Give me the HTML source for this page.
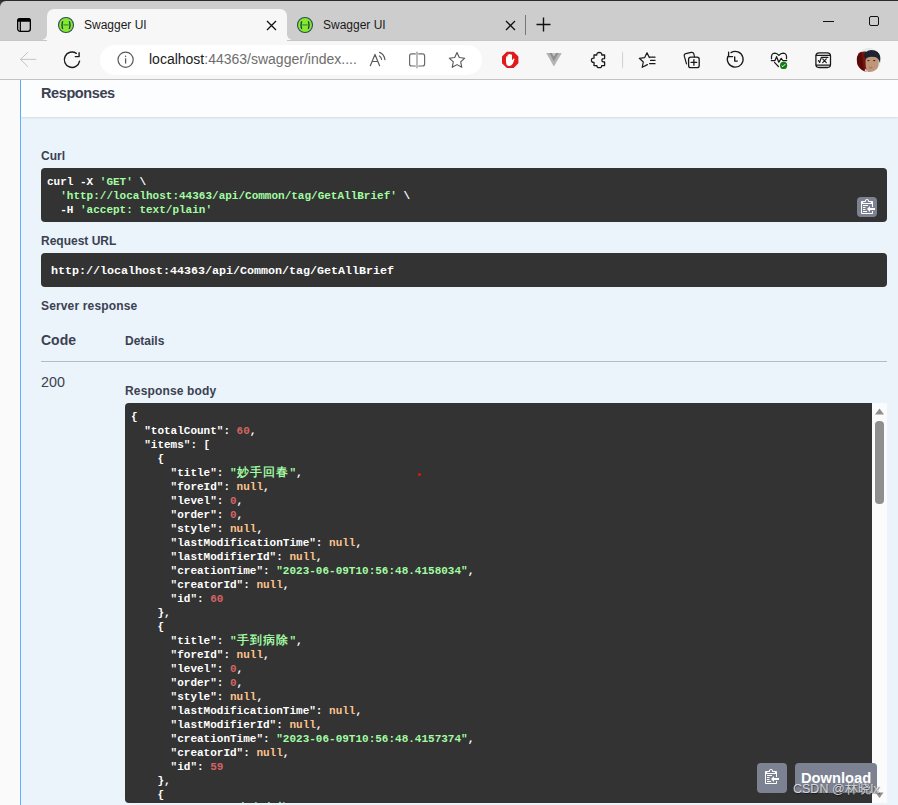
<!DOCTYPE html>
<html><head><meta charset="utf-8">
<style>
*{margin:0;padding:0;box-sizing:border-box}
html,body{width:898px;height:805px;overflow:hidden;background:#3a3a3a;font-family:"Liberation Sans",sans-serif}
.a{position:absolute}
#top{left:0;top:0;width:898px;height:1px;background:#2a2a2a}
#tabbar{left:0;top:1px;width:898px;height:39px;background:#cdcdcd;border-top-left-radius:6px}
#tab1{left:47px;top:9px;width:240px;height:31px;background:#f7f7f7;border-radius:7px 7px 0 0}
.tt{font-size:12px;color:#1a1a1a;white-space:nowrap}
#toolbar{left:0;top:40px;width:898px;height:39px;background:#f7f7f7}
#tbline{left:0;top:79px;width:898px;height:1px;background:#c4c4c4}
#addr{left:100px;top:45px;width:382px;height:30px;background:#fff;border-radius:15px}
#url{left:149px;top:51px;font-size:14px;color:#6e6e6e;white-space:nowrap}
#url b{font-weight:normal;color:#1b1b1b}
#page{left:0;top:80px;width:898px;height:725px;background:#fafafa}
#opb{left:20px;top:80px;width:878px;height:725px;background:#ebf3fb;border-left:1px solid #61affe}
#hdr{left:21px;top:80px;width:877px;height:37px;background:#fcfdff;box-shadow:0 1px 2px rgba(0,0,0,.1)}
.h{color:#3b4151;font-weight:bold;white-space:nowrap}
.blk{background:#333;border-radius:4px}
pre{font-family:"Liberation Mono",monospace;font-weight:bold;font-size:55px;line-height:70px;color:#fff;white-space:pre;transform:scale(.2);transform-origin:0 0}
.s{color:#a2fca2}.n{color:#d36363}.l{color:#fcc28c}
.btn{background:#7d8293;border-radius:4px}
.cj{display:inline-block;width:264px;font-size:60px;letter-spacing:6px;line-height:50px;white-space:nowrap}
</style></head><body>
<div class="a" id="top"></div>
<div class="a" id="tabbar"></div>
<div class="a" id="tab1"></div>
<div class="a" style="left:41px;top:34px;width:6px;height:6px;background:radial-gradient(circle at 0 0,#cdcdcd 5.5px,#f7f7f7 6.5px)"></div>
<div class="a" style="left:287px;top:34px;width:6px;height:6px;background:radial-gradient(circle at 100% 0,#cdcdcd 5.5px,#f7f7f7 6.5px)"></div>
<div class="a" id="toolbar"></div>
<div class="a" style="left:0;top:40px;width:47px;height:1px;background:#c6c6c6"></div><div class="a" style="left:287px;top:40px;width:611px;height:1px;background:#c6c6c6"></div>
<div class="a" id="tbline"></div>

<!-- sidebar icon -->
<svg class="a" style="left:17px;top:18px" width="14" height="14" viewBox="0 0 14 14"><rect x="0.65" y="0.65" width="12.7" height="12.7" rx="2.6" fill="none" stroke="#000" stroke-width="1.3"/><path d="M0 3Q0 0 3 0H11Q14 0 14 3V3.8H0Z" fill="#000"/><path d="M3.3 3V13.5" stroke="#000" stroke-width="1.2"/></svg>

<!-- tab 1 -->
<svg class="a" style="left:57px;top:16px" width="18" height="18" viewBox="0 0 18 18"><circle cx="9" cy="9" r="7.5" fill="#85ea2d" stroke="#2d4a58" stroke-width="1.1"/><path d="M6.2 5.5Q5.2 5.5 5.2 6.5V8Q5.2 9 4.3 9Q5.2 9 5.2 10V11.5Q5.2 12.5 6.2 12.5M11.8 5.5Q12.8 5.5 12.8 6.5V8Q12.8 9 13.7 9Q12.8 9 12.8 10V11.5Q12.8 12.5 11.8 12.5" fill="none" stroke="#173647" stroke-width="1.25"/><path d="M6.3 8.9H11.7" stroke="#4a8a3a" stroke-width="1.3"/></svg>
<div class="a tt" style="left:84px;top:18px">Swagger UI</div>
<svg class="a" style="left:266px;top:20px" width="11" height="11" viewBox="0 0 11 11"><path d="M1 1L10 10M10 1L1 10" stroke="#111" stroke-width="1.3"/></svg>
<!-- tab 2 -->
<svg class="a" style="left:296px;top:16px" width="18" height="18" viewBox="0 0 18 18"><circle cx="9" cy="9" r="7.5" fill="#85ea2d" stroke="#2d4a58" stroke-width="1.1"/><path d="M6.2 5.5Q5.2 5.5 5.2 6.5V8Q5.2 9 4.3 9Q5.2 9 5.2 10V11.5Q5.2 12.5 6.2 12.5M11.8 5.5Q12.8 5.5 12.8 6.5V8Q12.8 9 13.7 9Q12.8 9 12.8 10V11.5Q12.8 12.5 11.8 12.5" fill="none" stroke="#173647" stroke-width="1.25"/><path d="M6.3 8.9H11.7" stroke="#4a8a3a" stroke-width="1.3"/></svg>
<div class="a tt" style="left:323px;top:18px">Swagger UI</div>
<svg class="a" style="left:505px;top:20px" width="11" height="11" viewBox="0 0 11 11"><path d="M1 1L10 10M10 1L1 10" stroke="#111" stroke-width="1.3"/></svg>
<div class="a" style="left:525px;top:15px;width:1px;height:20px;background:#777"></div>
<svg class="a" style="left:536px;top:17px" width="15" height="15" viewBox="0 0 15 15"><path d="M7.5 0.5V14.5M0.5 7.5H14.5" stroke="#111" stroke-width="1.4"/></svg>
<!-- window controls -->
<div class="a" style="left:823px;top:20.5px;width:10.5px;height:1.2px;background:#111"></div>
<div class="a" style="left:869px;top:16px;width:10px;height:10px;border:1.4px solid #111;border-radius:2px"></div>

<!-- toolbar -->
<div class="a" id="addr"></div>
<div class="a" id="url"><b>localhost</b>:44363/swagger/index....</div>
<svg class="a" style="left:0;top:0" width="898" height="80" viewBox="0 0 898 80">
<g fill="none" stroke-linecap="round" stroke-linejoin="round">
<path d="M20.5 59.4H35.8M27.8 52.3L20.5 59.4L27.8 66.6" stroke="#c4c4c4" stroke-width="1"/>
<path d="M79.6 61.2A7.7 7.7 0 1 1 76.3 53.3" stroke="#1a1a1a" stroke-width="1.4"/>
<path d="M79.1 52.3V56.6H74.8" stroke="#1a1a1a" stroke-width="1.4" stroke-linecap="butt"/>
<circle cx="125.6" cy="59.8" r="7.6" stroke="#5a5a5a" stroke-width="1.2"/><path d="M125.6 58.3V63.6" stroke="#5a5a5a" stroke-width="1.3" stroke-linecap="butt"/><circle cx="125.6" cy="56.2" r="0.8" fill="#5a5a5a" stroke="none"/>
<path d="M370.3 65.7L375 54.4L379.6 65.7M372.1 61.5H377.9" stroke="#5a5a5a" stroke-width="1.2"/>
<path d="M379.4 56Q381.4 57.3 381.6 59.3M379.6 52.4Q384.2 54.3 384.9 59.6" stroke="#5a5a5a" stroke-width="1.2"/>
<path d="M415.3 53.9H411.6Q409.6 53.9 409.6 55.9V64Q409.6 66 411.6 66H415.3M418.7 53.9H422.6Q424.6 53.9 424.6 55.9V64Q424.6 66 422.6 66H418.7" stroke="#6a6a6a" stroke-width="1.2"/>
<path d="M417 52.2V67.7" stroke="#a0a0a0" stroke-width="1.4"/>
<path d="M457.00 52.60 L459.29 57.57 L464.73 58.22 L460.71 61.94 L461.78 67.31 L457.00 64.63 L452.22 67.31 L453.29 61.94 L449.27 58.22 L454.71 57.57Z" stroke="#555" stroke-width="1.1"/>
<path d="M594 55H596.8Q596.6 52.5 599.3 52.5Q602 52.5 601.8 55H604.6V58.6Q601.9 58.4 601.9 60.3Q601.9 62.2 604.6 62V65.6H601.7Q601.9 67.7 599.3 67.7Q596.7 67.7 596.9 65.6H594V62.3Q591.4 62.5 591.4 60.2Q591.4 57.9 594 58.1Z" stroke="#1a1a1a" stroke-width="1.3"/>
<path d="M622.6 52.2V67.8" stroke="#cfcfcf" stroke-width="1" stroke-linecap="butt"/>
<path d="M649.3 57.6L647 52.7L644.7 57.6L639.3 58.3L643.3 62L642.2 67.3L647.4 64.6" stroke="#1a1a1a" stroke-width="1.2"/>
<path d="M649.6 57.2H655M650.6 60.4H655M649.6 63.7H655" stroke="#1a1a1a" stroke-width="1.3"/>
<path d="M686.5 63.8L684.3 56.2Q683.8 54.2 685.8 53.7L691.2 52.4Q693.3 52 693.9 54L694.4 56.8" stroke="#1a1a1a" stroke-width="1.2"/>
<rect x="688.6" y="57.1" width="10.6" height="10.6" rx="2.2" stroke="#1a1a1a" stroke-width="1.3"/>
<path d="M693.9 59.6V65.2M691.1 62.4H696.7" stroke="#1a1a1a" stroke-width="1.3"/>
<path d="M731 52.6A7.9 7.9 0 1 1 727.9 56.3" stroke="#1a1a1a" stroke-width="1.3"/>
<path d="M728.6 52.2V56.6H732.6" stroke="#1a1a1a" stroke-width="1.3"/>
<path d="M734.7 57V61.1H737.3" stroke="#1a1a1a" stroke-width="1.4"/>
<path d="M771.5 58.7Q770.9 53.2 774.8 53.1Q777.2 53.1 778.9 55.4Q780.6 53.1 783.2 53.1Q787.1 53.2 786.5 58.7" stroke="#1a1a1a" stroke-width="1.25"/>
<path d="M774.5 62.4L778.4 66.5" stroke="#1a1a1a" stroke-width="1.25"/>
<path d="M771.3 60.5H775L776.6 56.7L778.8 62.2L781.2 58.3L782.8 60.5H786.7" stroke="#1a1a1a" stroke-width="1.25"/>
<circle cx="783.6" cy="65.4" r="3.6" fill="#127a12" stroke="none"/>
<path d="M782 66L782.9 66.6L785 64.4" stroke="#fff" stroke-width="1"/>
<rect x="815.9" y="52.9" width="14.6" height="14.6" rx="3.2" stroke="#1a1a1a" stroke-width="1.3"/>
<path d="M816.2 55.3H830.2M816.2 65.1H830.2" stroke="#1a1a1a" stroke-width="1.2"/>
<path d="M818.4 60.5L819.6 62.5L821.4 57.3H828M822.7 58.9L826.3 62.7M826.3 58.9L822.7 62.7" stroke="#1a1a1a" stroke-width="1.15"/>
</g>
<path d="M506.8 51.7H513.6L518.4 56.5V63.3L513.6 68.1H506.8L502 63.3V56.5Z" fill="#e01a1a"/>
<path d="M506.6 64.8Q505.6 61.5 506 59.2L506.2 56.6Q506.9 55.9 507.6 56.6V59.5V54.7Q508.3 54 509 54.7V59V54.2Q509.8 53.6 510.5 54.2V59V54.8Q511.2 54.2 512 54.8V60.6L513.2 58.7Q514.2 58.2 514.6 59L512.9 63.6Q511.8 66 509.4 66Q507.4 66 506.6 64.8Z" fill="#fff"/>
<path d="M546.2 53H561.8L553.9 66.4Z" fill="#b4b4b4"/>
<path d="M549.4 53H558.5L553.9 61.3Z" fill="#8e8e8e"/>
<path d="M551.7 53H556.1L553.9 56.8Z" fill="#c4c4c4"/>
<defs><clipPath id="av"><circle cx="868.8" cy="59.9" r="12"/></clipPath>
<radialGradient id="face" cx="0.5" cy="0.5" r="0.5"><stop offset="0" stop-color="#e0b8a0"/><stop offset="1" stop-color="#c89880"/></radialGradient></defs>
<g clip-path="url(#av)">
<rect x="856" y="47" width="26" height="26" fill="#e4eaee"/>
<path d="M856 54Q860 51 866 51.5L867 73H856Z" fill="#7a1410"/>
<path d="M857 56Q859 53 862 52.5L864 73H857Z" fill="#5a0a08"/>
<path d="M863.5 56Q865 50.5 871.5 50Q879 50 880.6 56.5L880 63Q878 57 874 57.5Q868 57.8 866 61L865 58Z" fill="#1f2330"/>
<path d="M865.6 60Q866.5 56.8 872 56.8Q878.5 57 878.8 61.5Q878.6 68 876 71Q872.5 73.5 868 72Q865.2 69 865.6 60Z" fill="#c09678"/>
<ellipse cx="868.4" cy="60.6" rx="1.3" ry="0.7" fill="#3a2a24"/>
<ellipse cx="874.2" cy="60.6" rx="1.3" ry="0.7" fill="#3a2a24"/>
<ellipse cx="870.8" cy="67.6" rx="2" ry="0.8" fill="#b07070"/>
<path d="M864 73L865.5 68.5Q867.2 70.5 868.5 73Z" fill="#cfdce4"/>
</g>
</svg>
<!-- page -->
<div class="a" id="page"></div>
<div class="a" id="opb"></div>
<div class="a" id="hdr"></div>
<div class="a h" style="left:41px;top:85px;font-size:14.5px;letter-spacing:-0.4px">Responses</div>

<div class="a h" style="left:41px;top:149px;font-size:12px">Curl</div>
<div class="a blk" style="left:41px;top:168px;width:846px;height:54px"></div>
<pre class="a" style="left:47px;top:175px">curl -X <span class="s">'GET'</span> \
  <span class="s">'http://localhost:44363/api/Common/tag/GetAllBrief'</span> \
  -H <span class="s">'accept: text/plain'</span></pre>
<div class="a btn" style="left:857px;top:197px;width:20px;height:20px"></div>
<svg class="a" style="left:861px;top:198px" width="15" height="17" viewBox="0 0 15 17"><path fill="#fff" fill-rule="evenodd" d="M2 13h4v1H2v-1zm5-6H2v1h5V7zm2 3V8l-3 3 3 3v-2h5v-2H9zM4.5 9H2v1h2.5V9zM2 12h2.5v-1H2v1zm9 1h1v2c-.02.28-.11.52-.3.7-.19.18-.42.28-.7.3H1c-.55 0-1-.45-1-1V4c0-.55.45-1 1-1h3c0-1.11.89-2 2-2 1.11 0 2 .89 2 2h3c.55 0 1 .45 1 1v5h-1V6H1v9h10v-2zM2 5h8c0-.55-.45-1-1-1H8c-.55 0-1-.45-1-1s-.45-1-1-1-1 .45-1 1-.45 1-1 1H3c-.55 0-1 .45-1 1z"/></svg>

<div class="a h" style="left:41px;top:234px;font-size:12px">Request URL</div>
<div class="a blk" style="left:41px;top:253px;width:846px;height:33.6px"></div>
<pre class="a" style="left:51px;top:264px;font-size:58.333px">http://localhost:44363/api/Common/tag/GetAllBrief</pre>

<div class="a h" style="left:41px;top:299px;font-size:12px;letter-spacing:0.15px">Server response</div>
<div class="a h" style="left:41px;top:332px;font-size:14px">Code</div>
<div class="a h" style="left:125px;top:334px;font-size:12px">Details</div>
<div class="a" style="left:41px;top:361px;width:846px;height:1px;background:#b5bac4"></div>
<div class="a" style="left:41px;top:374px;font-size:14.3px;color:#3b4151">200</div>
<div class="a h" style="left:125px;top:384px;font-size:12px;letter-spacing:0.15px">Response body</div>

<div class="a" style="left:125px;top:403px;width:762px;height:400px;background:#333;border-radius:4px 0 0 4px"></div>
<div class="a" style="left:872px;top:403px;width:15px;height:400px;background:#fbfbfb"></div>
<svg class="a" style="left:874px;top:406px" width="11" height="10" viewBox="0 0 11 10"><path d="M1 8.5L5.5 2.5L10 8.5Z" fill="#8f8f8f"/></svg>
<div class="a" style="left:875px;top:421px;width:8.5px;height:83px;background:#8f8f8f;border-radius:4px"></div>
<svg class="a" style="left:874px;top:791px" width="11" height="10" viewBox="0 0 11 10"><path d="M1.5 1.5L5.5 7L9.5 1.5Z" fill="#8f8f8f"/></svg>
<div class="a" style="left:125px;top:403px;width:747px;height:400px;overflow:hidden"><pre class="a" style="left:6px;top:7px">{
  "totalCount": <span class="n">60</span>,
  "items": [
    {
      "title": <span class="s">"<span class="cj">妙手回春</span>"</span>,
      "foreId": <span class="l">null</span>,
      "level": <span class="n">0</span>,
      "order": <span class="n">0</span>,
      "style": <span class="l">null</span>,
      "lastModificationTime": <span class="l">null</span>,
      "lastModifierId": <span class="l">null</span>,
      "creationTime": <span class="s">"2023-06-09T10:56:48.4158034"</span>,
      "creatorId": <span class="l">null</span>,
      "id": <span class="n">60</span>
    },
    {
      "title": <span class="s">"<span class="cj">手到病除</span>"</span>,
      "foreId": <span class="l">null</span>,
      "level": <span class="n">0</span>,
      "order": <span class="n">0</span>,
      "style": <span class="l">null</span>,
      "lastModificationTime": <span class="l">null</span>,
      "lastModifierId": <span class="l">null</span>,
      "creationTime": <span class="s">"2023-06-09T10:56:48.4157374"</span>,
      "creatorId": <span class="l">null</span>,
      "id": <span class="n">59</span>
    },
    {
      "title": <span class="s">"<span class="cj">十全十美</span>"</span>,</pre></div>
<div class="a btn" style="left:757px;top:763px;width:30px;height:30px"></div>
<svg class="a" style="left:765px;top:768px" width="15" height="17" viewBox="0 0 15 17"><path fill="#fff" fill-rule="evenodd" d="M2 13h4v1H2v-1zm5-6H2v1h5V7zm2 3V8l-3 3 3 3v-2h5v-2H9zM4.5 9H2v1h2.5V9zM2 12h2.5v-1H2v1zm9 1h1v2c-.02.28-.11.52-.3.7-.19.18-.42.28-.7.3H1c-.55 0-1-.45-1-1V4c0-.55.45-1 1-1h3c0-1.11.89-2 2-2 1.11 0 2 .89 2 2h3c.55 0 1 .45 1 1v5h-1V6H1v9h10v-2zM2 5h8c0-.55-.45-1-1-1H8c-.55 0-1-.45-1-1s-.45-1-1-1-1 .45-1 1-.45 1-1 1H3c-.55 0-1 .45-1 1z"/></svg>
<div class="a btn" style="left:795px;top:763px;width:82px;height:30px"></div>
<div class="a" style="left:801px;top:770px;font-size:14.7px;font-weight:bold;color:#fff">Download</div>
<div class="a" style="left:793px;top:781px;font-size:12.5px;color:rgba(228,228,228,.9);text-shadow:0.6px 0.6px 0.8px rgba(0,0,0,.55);white-space:nowrap">CSDN @林晓lx</div>
<div class="a" style="left:418px;top:473px;width:3px;height:3px;border-radius:50%;background:#f01010"></div>
</body></html>
